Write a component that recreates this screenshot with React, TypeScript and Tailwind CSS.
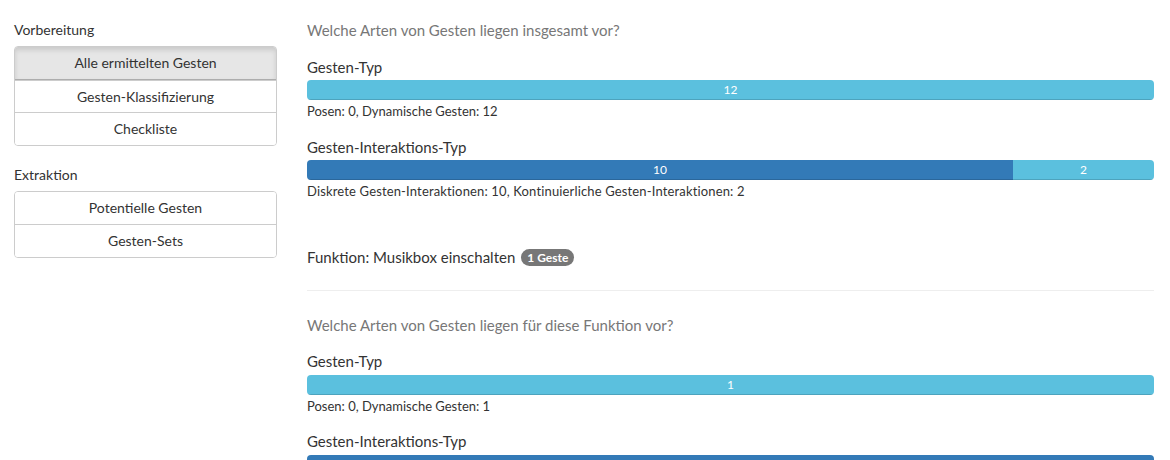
import React from 'react';

type Segment = { value: number; color: string };

const SideGroup: React.FC<{ title: string; items: string[]; active?: string; top: string }> = ({
  title,
  items,
  active,
  top,
}) => (
  <div className={top}>
    <p className="text-[14px] leading-[20px] text-[#333]">{title}</p>
    <div className="mt-[6px] flex flex-col rounded-[4px] border border-[#ccc] overflow-hidden">
      {items.map((item, i) => (
        <div
          key={item}
          className={`h-[32.5px] flex items-center justify-center text-[14px] text-[#333] ${
            i > 0 ? 'border-t border-[#ccc]' : ''
          } ${item === active ? 'bg-[#e6e6e6] shadow-[inset_0_3px_5px_rgba(0,0,0,0.125)] border-b border-[#adadad]' : 'bg-white'}`}
        >
          {item}
        </div>
      ))}
    </div>
  </div>
);

const Bar: React.FC<{ segments: Segment[]; total: number; top: string }> = ({ segments, total, top }) => (
  <div className={`${top} h-[20px] flex rounded-[4px] overflow-hidden bg-[#f5f5f5]`}>
    {segments.map((s, i) => (
      <div
        key={i}
        className={`${s.color} h-full text-center text-[12px] leading-[20px] text-white shadow-[inset_0_-1px_0_rgba(0,0,0,0.15)]`}
        style={{ width: `${(s.value / total) * 100}%` }}
      >
        {s.value}
      </div>
    ))}
  </div>
);

const App: React.FC = () => {
  return (
    <div className="w-[1170px] h-[460px] overflow-hidden bg-white flex font-['Lato',sans-serif] text-[#333]">
      {/* Sidebar */}
      <div className="w-[263px] ml-[14px] pt-[20px]">
        <SideGroup
          title="Vorbereitung"
          items={['Alle ermittelten Gesten', 'Gesten-Klassifizierung', 'Checkliste']}
          active="Alle ermittelten Gesten"
          top=""
        />
        <SideGroup title="Extraktion" items={['Potentielle Gesten', 'Gesten-Sets']} top="mt-[19px]" />
      </div>

      {/* Main */}
      <div className="ml-[30px] w-[847px] pt-[20px]">
        <p className="text-[15px] leading-[20px] text-[#777]">Welche Arten von Gesten liegen insgesamt vor?</p>

        <p className="mt-[17px] text-[15px] leading-[20px]">Gesten-Typ</p>
        <Bar top="mt-[3px]" total={12} segments={[{ value: 12, color: 'bg-[#5bc0de]' }]} />
        <p className="mt-[2px] text-[13px] leading-[18px]">Posen: 0, Dynamische Gesten: 12</p>

        <p className="mt-[17px] text-[15px] leading-[20px]">Gesten-Interaktions-Typ</p>
        <Bar
          top="mt-[3px]"
          total={12}
          segments={[
            { value: 10, color: 'bg-[#337ab7]' },
            { value: 2, color: 'bg-[#5bc0de]' },
          ]}
        />
        <p className="mt-[2px] text-[13px] leading-[18px] tracking-[0.15px]">
          Diskrete Gesten-Interaktionen: 10, Kontinuierliche Gesten-Interaktionen: 2
        </p>

        <div className="mt-[47px] flex items-center h-[20px]">
          <span className="text-[15px] leading-[20px]">Funktion: Musikbox einschalten</span>
          <span className="ml-[6px] h-[17px] px-[6px] rounded-full bg-[#777] text-white text-[12px] font-bold leading-[17px]">
            1 Geste
          </span>
        </div>

        <hr className="mt-[23px] border-0 border-t border-[#eee]" />

        <p className="mt-[24px] text-[15px] leading-[20px] text-[#777]">
          Welche Arten von Gesten liegen für diese Funktion vor?
        </p>

        <p className="mt-[16px] text-[15px] leading-[20px]">Gesten-Typ</p>
        <Bar top="mt-[4px]" total={1} segments={[{ value: 1, color: 'bg-[#5bc0de]' }]} />
        <p className="mt-[2px] text-[13px] leading-[18px]">Posen: 0, Dynamische Gesten: 1</p>

        <p className="mt-[16px] text-[15px] leading-[20px]">Gesten-Interaktions-Typ</p>
        <Bar top="mt-[4px]" total={1} segments={[{ value: 1, color: 'bg-[#337ab7]' }]} />
      </div>
    </div>
  );
};

export default App;
